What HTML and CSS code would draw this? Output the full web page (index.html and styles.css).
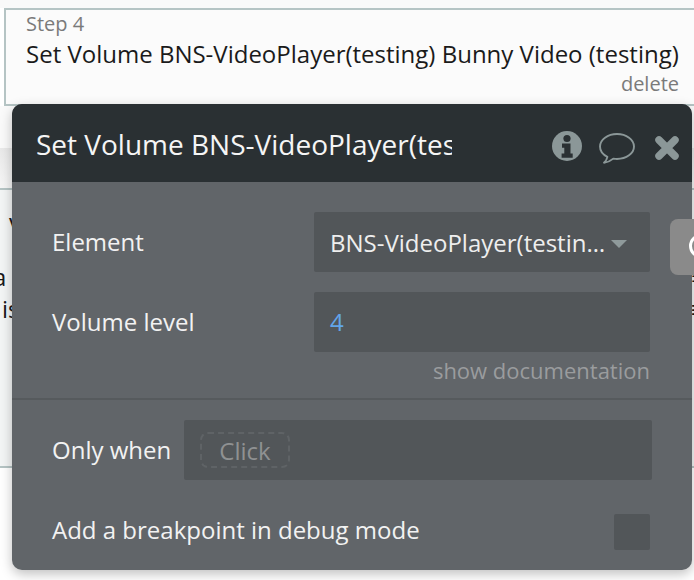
FILE: index.html
```html
<!DOCTYPE html>
<html lang="en">
<head>
<meta charset="utf-8">
<title>Set Volume</title>
<link rel="stylesheet" href="styles.css">
</head>
<body>
<div class="canvas">
  <div class="top-gap"></div>
  <section class="step">
    <div class="step-num">Step 4</div>
    <div class="step-title">Set Volume BNS-VideoPlayer(testing) Bunny Video (testing)</div>
    <div class="step-delete">delete</div>
  </section>
  <div class="under-white"></div>
  <div class="under-band"></div>
  <div class="under-panel">
    <span class="frag frag-v">V</span>
    <span class="frag frag-a">a</span>
    <span class="frag frag-is">is</span>
    <span class="frag frag-r1">=</span>
    <span class="frag frag-r2">≡</span>
  </div>

  <div class="popup">
    <header class="popup-head">
      <div class="popup-title">Set Volume BNS-VideoPlayer(testing) Bunny Video (testing)</div>
      <div class="popup-icons">
        <svg class="ico-info" width="32" height="32" viewBox="0 0 32 32" aria-hidden="true">
          <circle cx="16" cy="16" r="15" fill="#8b9798"/>
          <circle cx="16" cy="8.5" r="3.6" fill="#2a3033"/>
          <path d="M11 13.500h8.500v10h2.200v4.200H10.600v-4.200h2.700v-5.800H11z" fill="#2a3033"/>
        </svg>
        <svg class="ico-chat" width="38" height="32" viewBox="0 0 38 32" aria-hidden="true">
          <path d="M19 2C9.600 2 2 7.600 2 14.500c0 4.300 2.900 8.100 7.400 10.300-.4 2.200-1.700 4.400-3.400 5.900 3.900-.5 7.100-2.200 9.300-4.100 1.200.2 2.400.4 3.700.4 9.400 0 17-5.600 17-12.500S28.400 2 19 2z" fill="none" stroke="#8b9798" stroke-width="1.900" stroke-linejoin="round"/>
        </svg>
        <svg class="ico-close" width="26" height="26" viewBox="0 0 26 26" aria-hidden="true">
          <path d="M5 5L21 21M21 5L5 21" stroke="#8b9798" stroke-width="7.500" stroke-linecap="round"/>
        </svg>
      </div>
    </header>
    <div class="popup-fields">
      <div class="row">
        <label class="lbl">Element</label>
        <div class="field select">
          <span class="select-text">BNS-VideoPlayer(testing) Bunny Video</span>
          <span class="caret"></span>
        </div>
      </div>
      <div class="row row-vol">
        <label class="lbl">Volume level</label>
        <div class="field value">4</div>
      </div>
      <div class="doc">show documentation</div>
    </div>
    <div class="popup-cond">
      <div class="row-when">
        <label class="lbl lbl-when">Only when</label>
        <div class="field when"><span class="click">Click</span></div>
      </div>
      <div class="row-debug">
        <label class="lbl">Add a breakpoint in debug mode</label>
        <span class="check"></span>
      </div>
    </div>
  </div>

  <div class="side-btn"><span class="side-glyph"></span></div>
</div>
</body>
</html>
```
FILE: styles.css
```css
* { box-sizing: border-box; }
html, body { margin: 0; padding: 0; }
body {
  width: 694px;
  height: 580px;
  overflow: hidden;
  background: #ffffff;
  font-family: "Open Sans", "Liberation Sans", sans-serif;
}
.canvas {
  position: relative;
  width: 694px;
  height: 580px;
  overflow: hidden;
}
.top-gap { height: 8px; background: #f9f9f9; }
.step {
  width: 700px;
  height: 98px;
  margin-left: 4px;
  padding: 2px 0 0 20px;
  border: 2px solid #b5c4c4;
  background: #fbfbfb;
  position: relative;
}
.step-num { font-size: 20px; line-height: 24px; color: #7a7a7a; }
.step-title { font-size: 24px; line-height: 32px; color: #1a1a1a; white-space: nowrap; margin-top: 2px; }
.step-delete {
  width: 653px;
  font-size: 20px;
  line-height: 24px;
  margin-top: 2px;
  text-align: right;
  color: #7a7a7a;
}
.under-white { height: 42px; background: #fafafa; }
.under-band { height: 40px; background: linear-gradient(#e9e9e9, #f6f6f6); }
.under-panel {
  position: relative;
  height: 280px;
  background: #f3f5f5;
  border-top: 2px solid #b5c4c4;
  border-bottom: 2px solid #b5c4c4;
}
.frag { position: absolute; font-size: 24px; line-height: 30px; color: #1a1a1a; }
.frag-v { left: 9px; top: 21px; }
.frag-a { left: -7px; top: 72px; }
.frag-is { left: 2px; top: 104px; }
.frag-r1 { left: 691px; top: 73px; }
.frag-r2 { left: 691px; top: 104px; }

.popup {
  position: absolute;
  left: 12px;
  top: 104px;
  width: 680px;
  height: 466px;
  border-radius: 10px;
  background: #616569;
  box-shadow: 0 4px 12px rgba(0, 0, 0, 0.25);
  overflow: hidden;
  color: #ffffff;
}
.popup-head {
  height: 78px;
  background: #2a3033;
  display: flex;
  align-items: center;
  padding: 0 12px 0 24px;
}
.popup-title {
  width: 416px;
  font-size: 28px;
  line-height: 36px;
  white-space: nowrap;
  overflow: hidden;
  color: #f5f5f5;
  margin-top: 2px;
}
.popup-icons { display: flex; align-items: center; margin-left: 99px; }
.ico-info { margin-right: 15px; margin-top: 6px; }
.ico-chat { margin-right: 18px; margin-top: 10px; }
.ico-close { margin-top: 9px; }
.popup-fields { padding: 30px 42px 0 40px; height: 216px; }
.row { display: flex; align-items: center; justify-content: space-between; height: 60px; }
.row-vol { margin-top: 20px; }
.lbl { font-size: 24px; line-height: 30px; color: #f2f2f2; }
.field { background: #525659; border-radius: 2px; }
.select, .value {
  width: 336px;
  height: 60px;
  display: flex;
  align-items: center;
  padding-left: 16px;
  font-size: 24px;
}
.select-text {
  width: 277px;
  white-space: nowrap;
  overflow: hidden;
  text-overflow: ellipsis;
  color: #eeeeee;
}
.caret {
  margin-left: 4px;
  margin-top: 3px;
  width: 0;
  height: 0;
  border-left: 8px solid transparent;
  border-right: 8px solid transparent;
  border-top: 8px solid #8f9a9b;
}
.value { color: #62a5ea; padding-bottom: 2px; }
.doc {
  text-align: right;
  margin-top: 5px;
  font-size: 22px;
  line-height: 26px;
  color: #9a9c9e;
}
.popup-cond { border-top: 2px solid #565a5d; padding: 20px 40px 0 40px; }
.row-when { display: flex; align-items: center; height: 60px; }
.lbl-when { width: 132px; }
.when { width: 468px; height: 60px; display: flex; align-items: center; padding-left: 16px; }
.click {
  width: 90px;
  height: 36px;
  display: flex;
  align-items: center;
  justify-content: center;
  border: 2px dashed #5f6366;
  border-radius: 8px;
  color: #8f9192;
  font-size: 24px;
}
.row-debug {
  display: flex;
  align-items: flex-start;
  justify-content: space-between;
  width: 598px;
  height: 36px;
  margin-top: 34px;
}
.row-debug .lbl { margin-top: 1px; }
.check { width: 36px; height: 36px; background: #525659; border-radius: 2px; }
.side-btn {
  position: absolute;
  left: 670px;
  top: 219px;
  width: 40px;
  height: 56px;
  background: #8a8a8a;
  border-radius: 8px;
  overflow: hidden;
}
.side-glyph {
  position: absolute;
  left: 19px;
  top: 15px;
  width: 24px;
  height: 24px;
  border: 3px solid #ffffff;
  border-radius: 50%;
}
```
